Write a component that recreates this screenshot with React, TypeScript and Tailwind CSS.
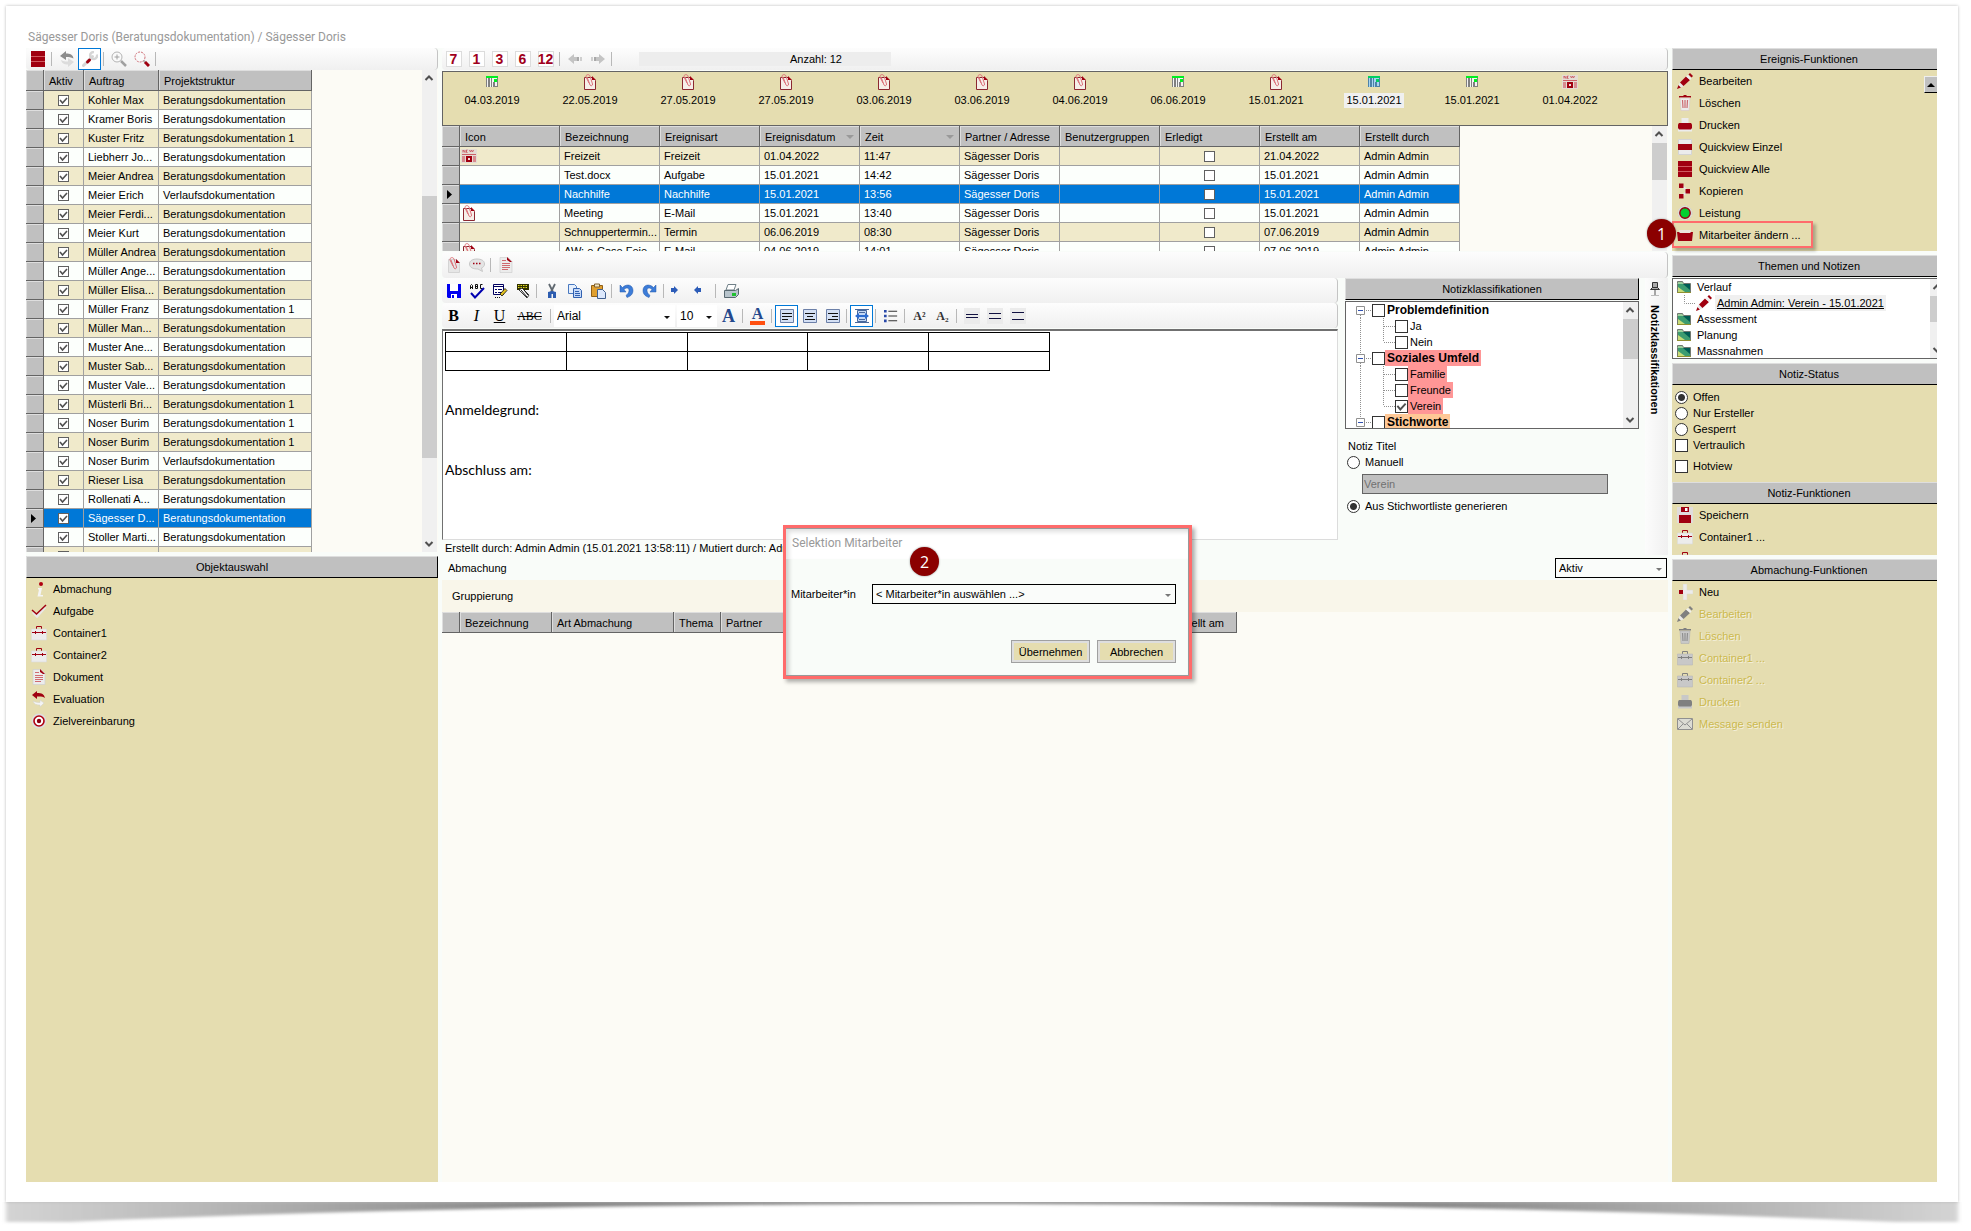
import React from 'react';
import clsx from 'clsx';

type IconProps = { name: string; off?: boolean; className?: string };

const Icon: React.FC<IconProps> = ({ name, off, className }) => {
  const main = off ? '#808080' : '#a00010';
  const soft = off ? '#c8c8c8' : '#ececec';
  const shapes: Record<string, React.ReactNode> = {
    stack: (
      <>
        <path fill={main} d="M1 0h14v16H1z" />
        <path stroke="#d05a60" d="M1 5.500h14M1 10.500h14" />
      </>
    ),
    quick: (
      <>
        <path fill="#ececec" stroke="#d4d4d4" d="M1.500.5h13v15h-13z" />
        <path fill={main} d="M1 5h14v6H1z" />
      </>
    ),
    swap: (
      <>
        <path fill="#8c8c8c" d="M1 5l6-5v2.500c4 0 7 1 7.500 5C12 6 10 6 7 6v3z" />
        <path fill="#dcdcdc" d="M15 11l-6 5v-2.500c-4 0-6-1-7-4.500 2 1.500 4 1.500 7 1.500V7z" />
      </>
    ),
    evaluation: (
      <>
        <path fill={main} d="M1 4l5-4v2c5 0 7 1 8 5-2-1.500-4-1.600-8-1.500V8z" />
        <path fill="#f4f4f4" stroke="#d0d0c8" strokeWidth=".5" d="M13 12l-4 4v-2c-4 0-6-1-7-4 2 1 4 1.500 7 1.500V9z" />
      </>
    ),
    wrench: (
      <>
        <path stroke="#d6d6d6" strokeWidth="3" strokeLinecap="round" d="M1.500 14.500l9-9" />
        <path fill="none" stroke="#d6d6d6" strokeWidth="2.500" d="M15 3.500a3.500 3.500 0 1 1-3-2.500" />
        <path stroke={main} strokeWidth="3" strokeLinecap="round" d="M5.500 11l2-2" />
      </>
    ),
    zoomIn: (
      <>
        <circle cx="6" cy="6" r="5" fill="#fafafa" stroke="#b4b4b4" />
        <path stroke="#a0a0a0" d="M6 3.500v5M3.500 6h5" />
        <path stroke="#a0a0a0" strokeWidth="2.500" d="M10 10l5 5" />
      </>
    ),
    zoomRed: (
      <>
        <circle cx="6" cy="6" r="5" fill="#fafafa" stroke="#d07078" strokeDasharray="2 1" />
        <path stroke="#b0b0b0" strokeWidth="2" d="M9.500 9.500l2 2" />
        <path stroke={main} strokeWidth="3" d="M11 11l4 4" />
      </>
    ),
    info: (
      <>
        <circle cx="10" cy="3" r="2" fill="#b00010" />
        <path fill="#f4f4f4" d="M7 7h4l-1.500 7H12v1.500H6.500L8 8.500H7z" />
      </>
    ),
    check: (
      <>
        <path fill="none" stroke="#e8e8e8" strokeWidth="3" d="M2 9l4 4 8-9" />
        <path fill="none" stroke={main} strokeWidth="1.500" d="M1 7l4.500 4L15 2" />
      </>
    ),
    case: (
      <>
        <path fill="none" stroke={main} d="M5.500 4V1.500h5V4" />
        <path fill={soft} stroke={off ? '#b8b8b8' : '#dadada'} strokeWidth=".6" d="M.5 4h15v11H.5z" />
        <path stroke={main} d="M1 7.500h14M4.500 6v3M11.500 6v3" />
      </>
    ),
    doc: (
      <>
        <path fill="#ececec" stroke="#d0d0d0" strokeWidth=".7" d="M2 .5h8l4 4V15.500H2z" />
        <path fill={main} d="M9 0l5 5h-2L9 3z" />
        <path stroke="#d06a70" d="M4 3.500h4M4 6.500h8M4 8.500h8M4 10.500h8M4 12.500h6" />
      </>
    ),
    target: (
      <>
        <circle cx="8" cy="8" r="7.500" fill="#dedede" />
        <circle cx="8" cy="8" r="5" fill="#fff" stroke="#b00010" strokeWidth="1.600" />
        <circle cx="8" cy="8" r="2.200" fill="#8c0010" />
      </>
    ),
    calendar: (
      <>
        <path fill="#f4f4f4" d="M2 2h12v11H2z" />
        <path fill="#808080" d="M2 4h1v9H2zM4 4h2v9H4zM7 4h1v9H7zM9 8h2v5H9zM13 4h1v9h-1zM11 12h3v1h-3z" />
        <path fill="#00f020" d="M2 2h12v2H2zM10 5h3v3h-3z" />
      </>
    ),
    calendarOn: (
      <>
        <path fill="#a8d4f0" d="M2 2h12v11H2z" />
        <path fill="#4c82a8" d="M2 4h1v9H2zM4 4h2v9H4zM7 4h1v9H7zM9 8h2v5H9zM13 4h1v9h-1zM11 12h3v1h-3z" />
        <path fill="#00d060" d="M2 2h12v2H2zM10 5h3v3h-3z" />
      </>
    ),
    clip: (
      <>
        <path fill="#f6efe9" stroke="#8c2830" d="M2.500 3.500h8l3 3v9h-11z" />
        <path fill={main} d="M10 2l4 4h-4z" />
        <path fill="none" stroke="#dc7078" d="M5 3l3 8c1 1.500 3 .5 2.500-1L8 2C7-.3 3.500.5 4 3l3 6" />
      </>
    ),
    clipSoft: (
      <>
        <path fill="#e6e6e6" stroke="#d4d4d4" d="M2.500 2.500h8l3 3v10h-11z" />
        <path fill={main} d="M10 2l4 4h-4z" />
        <path fill="none" stroke="#dc7078" d="M5 3l3 8c1 1.500 3 .5 2.500-1L8 2C7-.3 3.500.5 4 3l3 6" />
      </>
    ),
    news: (
      <>
        <path fill="#e4dcd4" d="M0 1h16v14H0z" />
        <path fill="none" stroke="#cc6068" d="M2 4.500V2l2 2.500V2M6.500 2h-1v2.500h1M8.500 2l1 2 1-2 1 2 1-2M1 6.500h14" />
        <path fill="#d88c90" d="M1 8h3v6H1zM12 8h3v6h-3z" />
        <path fill="#a00010" d="M5 8h6v6H5z" />
        <path fill="#f4dada" d="M7 10h2v2H7z" />
      </>
    ),
    speech: (
      <>
        <path fill="#e4e4e4" stroke="#c8c8c8" d="M8 2c4 0 7.500 1.500 7.500 5 0 2-1 3-3 4l1 3.500L9 12c-5 0-8.500-1.500-8.500-5C.5 3.500 4 2 8 2z" />
        <path stroke={main} strokeWidth="1.500" strokeDasharray="1.500 1.500" d="M4 6.500h8" />
      </>
    ),
    pencil: (
      <>
        <path fill={main} d="M0 16l1.500-4L4 14.500z" />
        <path fill="#e8e8e8" d="M1.500 12L3 9l4 4-3 1.500z" />
        <path fill={main} d="M3 9.500L9 3.500l4 3.500-6.500 6z" />
        <path fill="#efefef" d="M9 3.500L11 2l3.500 3.500L13 7z" />
        <path fill={main} d="M11.500 1.500L13 0l3 3-1.500 1.500z" />
      </>
    ),
    trash: (
      <>
        <path fill={main} d="M2 1h12v1.500H2zM6.500 0h3v1h-3z" />
        <path fill={soft} stroke={off ? '#b0b0b0' : '#d8c8c8'} strokeWidth=".6" d="M3 3h10l-1 12.500H4z" />
        <path stroke={off ? '#909090' : '#cc6a70'} strokeWidth="1.200" d="M5.500 5l.5 8M8 5v8M10.500 5l-.5 8" />
      </>
    ),
    printer: (
      <>
        <path fill={soft} d="M4.500 1h7v6h-7zM1 10h14v4.500H1z" />
        <path fill={main} d="M2 6h12l1 1.500V11l-1 1.500H2L1 11V7.500z" />
      </>
    ),
    nodes: (
      <>
        <path fill="none" stroke="#e8e8e8" strokeWidth="2" d="M5 3l6 5-6 5" />
        <path fill={main} d="M2 .5h4.500V5H2zM8.500 6H13v4.500H8.500zM2 11h4.500v4.500H2z" />
      </>
    ),
    service: (
      <>
        <circle cx="8" cy="8" r="7" fill="#e4e4e4" stroke="#d0d0d0" strokeDasharray="2 1.500" />
        <circle cx="8" cy="8" r="5.200" fill="#00d030" stroke="#900010" strokeWidth="1.400" />
      </>
    ),
    folder: (
      <>
        <path fill="#ece4dc" d="M2 3h12v3H2z" />
        <path fill={main} d="M0 5h2l1 1h10l1-1h2l-1 9H1z" />
      </>
    ),
    save: (
      <>
        <path fill="#e0dcdc" d="M0 0h16v16H0z" />
        <path fill={main} d="M2 8h12v8H2zM4 0h8v5H4z" />
        <path fill="#fff" d="M8 1h2.500v3H8z" />
      </>
    ),
    plus: (
      <>
        <path fill="#ececec" stroke="#dcd8c8" strokeWidth=".5" d="M6 0h4v6h6v4h-6v6H6v-6H2V6h4z" />
        <path fill={main} d="M2 6h4v4H2z" />
      </>
    ),
    mail: (
      <>
        <path fill="#dcdcd4" stroke="#909090" d="M.5 2.500h15v11H.5z" />
        <path fill="none" stroke="#909090" d="M1 3l7 6 7-6M1 13l5-5M15 13l-5-5" />
      </>
    ),
    greenFolder: (
      <>
        <path fill="#9ccf9c" stroke="#707870" d="M1.500 4.500v-2h5l1 2h7v9h-13z" />
        <path fill="#3c9c70" d="M2 5h12v8H2z" />
        <path fill="#005c54" d="M7 5h7v6z" />
        <path fill="#c8dc78" d="M2 8l7 5H2z" />
        <path fill="none" stroke="#909030" d="M1 13.500h14" />
      </>
    ),
    arrowLeft: (
      <>
        <path fill="#c4c4c4" d="M1 8l6-5v3h3v4H7v3z" />
        <path fill="#a8a8a8" d="M10 6h2v4h-2z" />
        <path fill="#cfcfcf" d="M13 6h2v4h-2z" />
      </>
    ),
    arrowRight: (
      <>
        <path fill="#c4c4c4" d="M15 8L9 3v3H6v4h3v3z" />
        <path fill="#a8a8a8" d="M4 6h2v4H4z" />
        <path fill="#cfcfcf" d="M1 6h2v4H1z" />
      </>
    ),
    disk: (
      <>
        <path fill="#0000f0" d="M1 1h14v14H2l-1-1z" />
        <path fill="#fff" d="M4 1h8v7H4zM5 11h6v4H5z" />
        <path fill="#0000f0" d="M6 12h2v3H6z" />
      </>
    ),
    spell: (
      <>
        <path fill="none" stroke="#111" d="M1.500 6V2.500l1-1 1 1V6M1.500 4.500h2M6.500 1.500v4h2v-4zM6.500 3.500h2M13.500 1.500h-2v4h2" />
        <path fill="none" stroke="#0000b0" strokeWidth="2" d="M2 10l4 4.500L15 5" />
      </>
    ),
    form: (
      <>
        <path fill="#fff" stroke="#000060" d="M1.500 1.500h10v10h-10z" />
        <path stroke="#000060" d="M1 3.500h10M3 6.500h2M6 6.500h4M3 9.500h2M6 9.500h4" />
        <path fill="#e0c020" stroke="#111" strokeWidth=".8" d="M8 11l5-5.500 2 2-5 5.500z" />
        <path stroke="#111" strokeDasharray="1 1" d="M3 14.500h6" />
      </>
    ),
    highlight: (
      <>
        <path fill="#303000" d="M2 1h12v6H2z" />
        <path stroke="#e8e020" strokeDasharray="1.500 1" d="M3 2.500h10M3 4.500h10" />
        <path fill="#fff" stroke="#111" strokeWidth=".8" d="M4 7l3-2 7 7-2 3z" />
        <path stroke="#111" d="M6 7l6 7M9 7l4 5" />
      </>
    ),
    cut: (
      <>
        <path stroke="#606870" strokeWidth="1.800" d="M5 1l4 8M11 1L7 9" />
        <path fill="#2c5cb0" d="M4 9l4-1 4 1v6H9v-4H7.500v4H4z" />
      </>
    ),
    copy: (
      <>
        <path fill="#e6effc" stroke="#4878c0" d="M1.500 1.500h6l2 2v7h-8z" />
        <path fill="#c4d8f8" stroke="#3060b0" d="M6.500 5.500h6l2 2v7h-8z" />
        <path stroke="#3060b0" d="M8 8.500h4M8 10.500h5M8 12.500h5" />
      </>
    ),
    paste: (
      <>
        <path fill="#e0a030" stroke="#906018" d="M1.500 2.500h11v11h-11z" />
        <path fill="#f4e8c0" stroke="#806030" d="M4.500 1h5v3h-5z" />
        <path fill="#dce8fc" stroke="#406090" d="M7.500 6.500h5l3 3v6h-8z" />
      </>
    ),
    undo: <path fill="#3c7cd8" stroke="#2458a8" strokeWidth=".5" d="M1 2v7h6L5 6.500C8 4 10 5 10 7.500s-2 4-3 5l1 2c3-1 6-3 6-7C14 2 8 0 3.500 4.500z" />,
    redo: <path fill="#3c7cd8" stroke="#2458a8" strokeWidth=".5" d="M14 2v7H8l2-2.500C7 4 5 5 5 7.500s2 4 3 5l-1 2c-3-1-6-3-6-7C1 2 7 0 11.500 4.500z" />,
    hintRight: <path fill="#2c5cb8" d="M0 5h3V3l4 4-4 4V9H0z" />,
    hintLeft: <path fill="#2c5cb8" d="M7 5H4V3L0 7l4 4V9h3z" />,
    print: (
      <>
        <path fill="#fff" stroke="#708088" d="M5 1.500h8L11 7H3z" />
        <path fill="#b8c4cc" stroke="#586870" d="M1.500 7.500h11l3-2v6l-3 3h-11z" />
        <path fill="#20c030" d="M9 10h4v3H9z" />
      </>
    ),
    alignLeft: (
      <>
        <path fill="#d4e0f4" stroke="#6c80a8" d="M1.500 1.500h13v13h-13z" />
        <path stroke="#111" d="M3 5.500h10M3 8.500h10M3 11.500h6" />
      </>
    ),
    alignCenter: (
      <>
        <path fill="#d4e0f4" stroke="#6c80a8" d="M1.500 1.500h13v13h-13z" />
        <path stroke="#111" d="M3 5.500h10M5 8.500h6M3 11.500h10" />
      </>
    ),
    alignRight: (
      <>
        <path fill="#d4e0f4" stroke="#6c80a8" d="M1.500 1.500h13v13h-13z" />
        <path stroke="#111" d="M3 5.500h10M7 8.500h6M3 11.500h10" />
      </>
    ),
    wrap: (
      <>
        <path fill="#c4d8f4" stroke="#48689c" d="M3.500 2.500h9v11h-9z" />
        <path stroke="#48689c" d="M1 1.500h14M1 14.500h14M5 4.500h6M5 11.500h6" />
        <path fill="#2c6cd0" d="M1 8l4-3v2h6V5l4 3-4 3V9H5v2z" />
      </>
    ),
    list: (
      <>
        <path fill="#2848a8" d="M0 1h3v3H0zM0 6.500h3v3H0zM0 12h3v3H0z" />
        <path stroke="#333" strokeWidth="1.200" d="M5 2.500h10M5 8h10M5 13.500h10" />
      </>
    ),
    pin: (
      <>
        <path fill="#aaa" stroke="#333" d="M5.500 1.500h5v5h-5zM3.500 8.500l2-2h5l2 2z" />
        <path stroke="#555" d="M8 9v5" />
        <path stroke="#bbb" d="M4 14.500h8" />
      </>
    ),
    up: <path fill="none" stroke="#505050" strokeWidth="2" d="M4.500 10L8 6.500l3.500 3.500" />,
    down: <path fill="none" stroke="#505050" strokeWidth="2" d="M4.500 6L8 9.500 11.500 6" />,
  };
  return (
    <svg viewBox="0 0 16 16" aria-hidden="true" className={clsx('block h-4 w-4 shrink-0', className)}>
      {shapes[name]}
    </svg>
  );
};

const Rules: React.FC<{ gap: number }> = ({ gap }) => (
  <svg viewBox="0 0 16 16" aria-hidden="true" className="block h-4 w-4">
    <path fill="#ebebeb" d="M0 0h16v16H0z" />
    <path stroke="#101040" d={`M2 ${7.5 - gap}h12M2 ${8.5 + gap}h12`} />
  </svg>
);

const Tool: React.FC<{ label: string; on?: boolean; wide?: boolean; children: React.ReactNode }> = ({ label, on, wide, children }) => (
  <button
    type="button"
    aria-label={label}
    className={clsx('flex h-[22px] shrink-0 items-center justify-center', wide ? 'w-[37px]' : 'w-[23px]', on && 'border border-[#0078d7] bg-white')}
  >
    {children}
  </button>
);

const Sep = () => <span className="mx-[2px] h-[14px] w-[2px] shrink-0 border-l border-[#b8b8b8]" />;

const Bar: React.FC<{ className?: string; children: React.ReactNode }> = ({ className, children }) => (
  <div className={clsx('flex items-center rounded-sm border-r border-[#c4c4c4] bg-gradient-to-b from-[#fdfdfd] to-[#f0f0f0]', className)}>{children}</div>
);

const PanelTitle: React.FC<{ children: React.ReactNode }> = ({ children }) => (
  <h2 className="h-[22px] shrink-0 border-t border-r border-b border-l border-t-[#dedede] border-r-black border-b-black border-l-[#dedede] bg-[#c0c0c0] text-center leading-[20px]">
    {children}
  </h2>
);

const Check: React.FC<{ label?: string; id?: string; checked?: boolean; size?: 'sm' | 'md' }> = ({ label, id, checked, size = 'md' }) => (
  <span className="relative block shrink-0">
    <input
      type="checkbox"
      id={id}
      aria-label={label}
      defaultChecked={checked}
      className={clsx('peer block appearance-none border bg-white', size === 'sm' ? 'h-[11px] w-[11px] border-[#606060]' : 'h-[13px] w-[13px] border-[#333]')}
    />
    <svg viewBox="0 0 11 11" aria-hidden="true" className="pointer-events-none absolute inset-0 hidden h-full w-full peer-checked:block">
      <path fill="none" stroke="#505050" strokeWidth="1.600" d="M2 5l2.500 3L9 3" />
    </svg>
  </span>
);

const Radio: React.FC<{ id: string; name: string; label: string; checked?: boolean }> = ({ id, name, label, checked }) => (
  <div className="flex h-4 items-center gap-[5px]">
    <input
      type="radio"
      id={id}
      name={name}
      defaultChecked={checked}
      className="block h-[13px] w-[13px] appearance-none rounded-full border border-[#333] bg-white checked:bg-[radial-gradient(circle,#333_3px,#fff_4px)]"
    />
    <label htmlFor={id}>{label}</label>
  </div>
);

const Combo: React.FC<{ label: string; id?: string; value: string; plain?: boolean; className?: string }> = ({ label, id, value, plain, className }) => (
  <span className={clsx('relative block shrink-0', className)}>
    <select
      id={id}
      aria-label={label}
      className={clsx('block w-full appearance-none', plain ? 'h-[22px] bg-white pl-[3px] text-xs' : 'h-5 border border-black bg-[#fafcfa] pl-[3px]')}
    >
      <option>{value}</option>
    </select>
    <svg viewBox="0 0 6 3" aria-hidden="true" className="pointer-events-none absolute top-1/2 right-[5px] h-[3px] w-[6px]">
      <path fill={plain ? '#111' : '#777'} d="M0 0h6L3 3z" />
    </svg>
  </span>
);

const Scroll: React.FC<{ before: string; thumb: string }> = ({ before, thumb }) => (
  <div className="flex w-[15px] shrink-0 flex-col bg-[#f0f0f0]">
    <Icon name="up" className="-mx-px" />
    <div className={before} />
    <div className={clsx('bg-[#cdcdcd]', thumb)} />
    <Icon name="down" className="-mx-px mt-auto" />
  </div>
);

const Pointer = () => (
  <svg viewBox="0 0 5 9" aria-hidden="true" className="mr-auto ml-[5px] block h-[9px] w-[5px]">
    <path d="M0 0l5 4.500L0 9z" />
  </svg>
);

const HEAD = 'h-[21px] overflow-hidden whitespace-nowrap border-r border-b border-[#646464] bg-[#c0c0c0] px-[5px] pt-0.5 text-left font-normal shadow-[inset_1px_1px_0_#dedede]';
const ROWHEAD = 'border-r border-b border-[#646464] bg-[#c0c0c0] shadow-[inset_1px_1px_0_#dedede]';
const CELL = 'h-[19px] overflow-hidden whitespace-nowrap border-r border-b border-[#a0a0a0] px-[4px] leading-[18px]';

const rowColor = (i: number, selected: boolean) => (selected ? 'bg-[#0078d7] text-white' : i % 2 ? 'bg-[#fcfffc]' : 'bg-[#f0eacb]');

const B = 'Beratungsdokumentation';
const V = 'Verlaufsdokumentation';
const clients: [string, string][] = [
  ['Kohler Max', B],
  ['Kramer Boris', B],
  ['Kuster Fritz', `${B} 1`],
  ['Liebherr Jo...', B],
  ['Meier Andrea', B],
  ['Meier Erich', V],
  ['Meier Ferdi...', B],
  ['Meier Kurt', B],
  ['Müller Andrea', B],
  ['Müller Ange...', B],
  ['Müller Elisa...', B],
  ['Müller Franz', `${B} 1`],
  ['Müller Man...', B],
  ['Muster Ane...', B],
  ['Muster Sab...', B],
  ['Muster Vale...', B],
  ['Müsterli Bri...', `${B} 1`],
  ['Noser Burim', `${B} 1`],
  ['Noser Burim', `${B} 1`],
  ['Noser Burim', V],
  ['Rieser Lisa', B],
  ['Rollenati A...', B],
  ['Sägesser D...', B],
  ['Stoller Marti...', B],
  ['Test Test', B],
];

const timeline: [string, string][] = [
  ['calendar', '04.03.2019'],
  ['clip', '22.05.2019'],
  ['clip', '27.05.2019'],
  ['clip', '27.05.2019'],
  ['clip', '03.06.2019'],
  ['clip', '03.06.2019'],
  ['clip', '04.06.2019'],
  ['calendar', '06.06.2019'],
  ['clip', '15.01.2021'],
  ['calendarOn', '15.01.2021'],
  ['calendar', '15.01.2021'],
  ['news', '01.04.2022'],
];

const events = [
  { icon: 'news', name: 'Freizeit', kind: 'Freizeit', date: '01.04.2022', time: '11:47', created: '21.04.2022' },
  { icon: '', name: 'Test.docx', kind: 'Aufgabe', date: '15.01.2021', time: '14:42', created: '15.01.2021' },
  { icon: '', name: 'Nachhilfe', kind: 'Nachhilfe', date: '15.01.2021', time: '13:56', created: '15.01.2021' },
  { icon: 'clip', name: 'Meeting', kind: 'E-Mail', date: '15.01.2021', time: '13:40', created: '15.01.2021' },
  { icon: '', name: 'Schnuppertermin...', kind: 'Termin', date: '06.06.2019', time: '08:30', created: '07.06.2019' },
  { icon: 'clip', name: 'AW: e-Case Feie...', kind: 'E-Mail', date: '04.06.2019', time: '14:01', created: '07.06.2019' },
];

const eventHeads = ['Icon', 'Bezeichnung', 'Ereignisart', 'Ereignisdatum', 'Zeit', 'Partner / Adresse', 'Benutzergruppen', 'Erledigt', 'Erstellt am', 'Erstellt durch'];

const objects: [string, string][] = [
  ['info', 'Abmachung'],
  ['check', 'Aufgabe'],
  ['case', 'Container1'],
  ['case', 'Container2'],
  ['doc', 'Dokument'],
  ['evaluation', 'Evaluation'],
  ['target', 'Zielvereinbarung'],
];

const eventActions: [string, string][] = [
  ['pencil', 'Bearbeiten'],
  ['trash', 'Löschen'],
  ['printer', 'Drucken'],
  ['quick', 'Quickview Einzel'],
  ['stack', 'Quickview Alle'],
  ['nodes', 'Kopieren'],
  ['service', 'Leistung'],
];

const dealActions: [string, string][] = [
  ['pencil', 'Bearbeiten'],
  ['trash', 'Löschen'],
  ['case', 'Container1 ...'],
  ['case', 'Container2 ...'],
  ['printer', 'Drucken'],
  ['mail', 'Message senden'],
];

const tree = [
  { text: 'Problemdefinition', root: true },
  { text: 'Ja' },
  { text: 'Nein' },
  { text: 'Soziales Umfeld', root: true, mark: 'bg-[#ff9696]' },
  { text: 'Familie', mark: 'bg-[#ff9696]' },
  { text: 'Freunde', mark: 'bg-[#ff9696]' },
  { text: 'Verein', mark: 'bg-[#ff9696]', checked: true },
  { text: 'Stichworte', root: true, mark: 'bg-[#ffc896]' },
];

const Action: React.FC<{ icon: string; off?: boolean; children: React.ReactNode }> = ({ icon, off, children }) => (
  <button
    type="button"
    disabled={off}
    className={clsx('flex h-[22px] shrink-0 items-center gap-1.5 pl-[5px] whitespace-nowrap', off && 'text-[#ccb94e] [text-shadow:1px_1px_0_#f4f0dc]')}
  >
    <Icon name={icon} off={off} />
    {children}
  </button>
);

const Badge: React.FC<{ className: string; children: React.ReactNode }> = ({ className, children }) => (
  <span className={clsx("absolute flex h-[29px] w-[29px] items-center justify-center rounded-full bg-[#8b0000] font-['Open_Sans',sans-serif] text-base text-white shadow-[0_0_2px_#888]", className)}>
    {children}
  </span>
);

const LeftPanel = () => (
  <aside className="flex min-h-0 flex-col">
    <Bar className="h-[22px] shrink-0">
      <Tool label="Liste"><Icon name="stack" /></Tool>
      <Sep />
      <Tool label="Aktualisieren"><Icon name="swap" /></Tool>
      <Tool label="Werkzeug" on><Icon name="wrench" /></Tool>
      <Sep />
      <Tool label="Vergrössern"><Icon name="zoomIn" /></Tool>
      <Tool label="Suche"><Icon name="zoomRed" /></Tool>
      <Sep />
    </Bar>
    <div className="mb-1 flex h-[482px] shrink-0 justify-between overflow-hidden bg-[#fcfbf5]">
      <table className="w-[286px] table-fixed border-separate border-spacing-0 self-start">
        <thead>
          <tr>
            <th className={clsx(HEAD, 'w-[18px]')} />
            <th className={clsx(HEAD, 'w-[40px]')}>Aktiv</th>
            <th className={clsx(HEAD, 'w-[75px]')}>Auftrag</th>
            <th className={HEAD}>Projektstruktur</th>
          </tr>
        </thead>
        <tbody>
          {clients.map(([name, project], i) => {
            const selected = name.startsWith('Sägesser');
            return (
              <tr key={i} className={rowColor(i, selected)}>
                <td className={ROWHEAD}>{selected && <Pointer />}</td>
                <td className={CELL}>
                  <div className="flex justify-center"><Check label={`${name} aktiv`} checked size="sm" /></div>
                </td>
                <td className={CELL}>{name}</td>
                <td className={CELL}>{project}</td>
              </tr>
            );
          })}
        </tbody>
      </table>
      <div className="mr-px flex"><Scroll before="h-[110px]" thumb="h-[262px]" /></div>
    </div>
    <PanelTitle>Objektauswahl</PanelTitle>
    <div className="flex flex-1 flex-col bg-[#e5ddb0]">
      {objects.map(([icon, text]) => (
        <Action key={text} icon={icon}>{text}</Action>
      ))}
    </div>
  </aside>
);

const Events = () => (
  <>
    <Bar className="h-[22px]">
      {['7', '1', '3', '6', '12'].map((n) => (
        <Tool key={n} label={`${n} anzeigen`}>
          <span className="flex h-4 w-4 items-center justify-center border border-[#dcdcdc] bg-white text-sm leading-none font-bold text-[#a0001c]">{n}</span>
        </Tool>
      ))}
      <Sep />
      <Tool label="Zurück"><Icon name="arrowLeft" /></Tool>
      <Tool label="Vor"><Icon name="arrowRight" /></Tool>
      <Sep />
      <span className="ml-6 h-[14px] w-[252px] bg-[#ededed] pl-[151px] leading-[14px]">Anzahl: 12</span>
    </Bar>
    <div className="mt-px flex h-[55px] border border-[#646464] bg-[#e5ddb0]">
      {timeline.map(([icon, date], i) => (
        <button key={i} type="button" className="flex w-[98px] flex-col items-center pt-[2px]">
          <Icon name={icon} />
          <span className={clsx('mt-[3px] px-0.5 leading-[15px]', icon === 'calendarOn' && 'bg-[#f0f0f0]')}>{date}</span>
        </button>
      ))}
    </div>
    <div className="flex h-[125px] justify-between overflow-hidden bg-[#fcfbf5]">
      <table className="w-[1018px] table-fixed border-separate border-spacing-0 self-start">
        <thead>
          <tr>
            <th className={clsx(HEAD, 'w-[18px]')} />
            {eventHeads.map((head) => (
              <th key={head} className={HEAD}>
                <span className="flex items-center justify-between">
                  {head}
                  {(head === 'Ereignisdatum' || head === 'Zeit') && (
                    <svg viewBox="0 0 8 4" aria-hidden="true" className="h-1 w-2"><path fill="#999" d="M0 0h8L4 4z" /></svg>
                  )}
                </span>
              </th>
            ))}
          </tr>
        </thead>
        <tbody>
          {events.map((e, i) => {
            const selected = i === 2;
            return (
              <tr key={i} className={rowColor(i, selected)}>
                <td className={ROWHEAD}>{selected && <Pointer />}</td>
                <td className={clsx(CELL, 'px-px')}>{e.icon && <Icon name={e.icon} />}</td>
                <td className={CELL}>{e.name}</td>
                <td className={CELL}>{e.kind}</td>
                <td className={CELL}>{e.date}</td>
                <td className={CELL}>{e.time}</td>
                <td className={CELL}>Sägesser Doris</td>
                <td className={CELL} />
                <td className={CELL}><div className="flex justify-center"><Check label={`${e.name} erledigt`} size="sm" /></div></td>
                <td className={CELL}>{e.created}</td>
                <td className={CELL}>Admin Admin</td>
              </tr>
            );
          })}
        </tbody>
      </table>
      <div className="mr-px flex"><Scroll before="h-px" thumb="h-[37px]" /></div>
    </div>
    <Bar className="mt-px h-[26px]">
      <Tool label="Anhang"><Icon name="clipSoft" /></Tool>
      <Tool label="Kommentar"><Icon name="speech" /></Tool>
      <Sep />
      <Tool label="Dokument"><Icon name="doc" /></Tool>
    </Bar>
  </>
);

const Editor = () => (
  <div className="flex min-w-0 flex-1 flex-col">
    <Bar className="h-[25px] shrink-0">
      <Tool label="Speichern"><Icon name="disk" /></Tool>
      <Tool label="Rechtschreibung"><Icon name="spell" /></Tool>
      <Tool label="Formular"><Icon name="form" /></Tool>
      <Tool label="Markieren"><Icon name="highlight" /></Tool>
      <Sep />
      <Tool label="Ausschneiden"><Icon name="cut" /></Tool>
      <Tool label="Kopieren"><Icon name="copy" /></Tool>
      <Tool label="Einfügen"><Icon name="paste" /></Tool>
      <Sep />
      <Tool label="Rückgängig"><Icon name="undo" /></Tool>
      <Tool label="Wiederholen"><Icon name="redo" /></Tool>
      <Sep />
      <Tool label="Einzug vergrössern"><Icon name="hintRight" /></Tool>
      <Tool label="Einzug verkleinern"><Icon name="hintLeft" /></Tool>
      <Sep />
      <Tool label="Drucken"><Icon name="print" /></Tool>
    </Bar>
    <Bar className="h-[25px] shrink-0 font-['Liberation_Serif',serif] text-base">
      <Tool label="Fett"><b>B</b></Tool>
      <Tool label="Kursiv"><i>I</i></Tool>
      <Tool label="Unterstrichen"><u>U</u></Tool>
      <Tool label="Durchgestrichen" wide><s className="text-xs">ABC</s></Tool>
      <Sep />
      <Combo label="Schriftart" value="Arial" plain className="mr-0.5 w-[121px] font-['Liberation_Sans',sans-serif]" />
      <Combo label="Schriftgrösse" value="10" plain className="w-[40px] font-['Liberation_Sans',sans-serif]" />
      <Tool label="Schrift"><b className="text-lg leading-none text-[#24488c]">A</b></Tool>
      <Sep />
      <Tool label="Schriftfarbe"><b className="h-[18px] border-b-4 border-[#ff5010] px-0.5 leading-[14px] text-[#24488c]">A</b></Tool>
      <Sep />
      <Tool label="Linksbündig" on><Icon name="alignLeft" /></Tool>
      <Tool label="Zentriert"><Icon name="alignCenter" /></Tool>
      <Tool label="Rechtsbündig"><Icon name="alignRight" /></Tool>
      <Sep />
      <Tool label="Umbruch" on><Icon name="wrap" /></Tool>
      <Sep />
      <Tool label="Aufzählung"><Icon name="list" className="h-[14px] w-[14px]" /></Tool>
      <Sep />
      <Tool label="Hochgestellt"><b className="text-xs text-[#333]">A²</b></Tool>
      <Tool label="Tiefgestellt"><b className="text-xs text-[#333]">A₂</b></Tool>
      <Sep />
      <Tool label="Abstand einfach"><Rules gap={1} /></Tool>
      <Tool label="Abstand mittel"><Rules gap={2} /></Tool>
      <Tool label="Abstand doppelt"><Rules gap={3} /></Tool>
    </Bar>
    <div className="mt-px flex h-[211px] shrink-0 flex-col border border-t-2 border-[#dcdcdc] border-t-[#707070] border-l-[#707070] bg-white pt-px pl-[2px] font-['Lato',sans-serif] text-sm">
      <table className="w-[605px] table-fixed border-collapse">
        <tbody>
          {[0, 1].map((r) => (
            <tr key={r}>
              {[0, 1, 2, 3, 4].map((c) => (
                <td key={c} className="h-[19px] border border-black" />
              ))}
            </tr>
          ))}
        </tbody>
      </table>
      <p className="mt-[29px] leading-5">Anmeldegrund:</p>
      <p className="mt-[40px] leading-5">Abschluss am:</p>
    </div>
    <p className="pl-[3px] leading-4 whitespace-nowrap">Erstellt durch: Admin Admin (15.01.2021 13:58:11) / Mutiert durch: Admin Admin</p>
  </div>
);

const Classification = () => (
  <div className="flex w-[294px] shrink-0 flex-col">
    <PanelTitle>Notizklassifikationen</PanelTitle>
    <div className="mt-px flex h-[128px] shrink-0 overflow-hidden border border-[#646464] bg-white">
      <ul className="flex-1 pl-[10px]">
        {tree.map((node, i) => (
          <li key={node.text} className="flex h-4 items-center">
            {node.root ? (
              <svg viewBox="0 0 16 16" aria-hidden="true" className="h-4 w-4 shrink-0">
                {i > 0 && <path stroke="#909090" strokeDasharray="1 1" d="M4.500 0v4" />}
                {i < 7 && <path stroke="#909090" strokeDasharray="1 1" d="M4.500 13v3" />}
                <path stroke="#909090" strokeDasharray="1 1" d="M10 8.500h6" />
                <path fill="#fff" stroke="#909090" d="M.5 4.500h8v8h-8z" />
                <path stroke="#3050b0" d="M2 8.500h5" />
              </svg>
            ) : (
              <svg viewBox="0 0 39 16" aria-hidden="true" className="h-4 w-[39px] shrink-0">
                <path fill="none" stroke="#909090" strokeDasharray="1 1" d={`M4.500 0v16M27.500 0v${tree[i + 1].root ? 8 : 16}M28 8.500h11`} />
              </svg>
            )}
            <Check id={`node-${i}`} checked={node.checked} />
            <label htmlFor={`node-${i}`} className={clsx('px-0.5 leading-4 whitespace-nowrap', node.root && 'text-xs font-bold', node.mark)}>
              {node.text}
            </label>
          </li>
        ))}
      </ul>
      <Scroll before="h-px" thumb="h-[40px]" />
    </div>
    <fieldset className="mt-[9px] flex flex-col pl-[2px]">
      <legend className="mb-0 pl-px leading-4">Notiz Titel</legend>
      <Radio id="title-manual" name="title" label="Manuell" />
      <input aria-label="Titel" disabled defaultValue="Verein" className="my-[4px] ml-[15px] block h-[20px] w-[246px] border border-[#646464] bg-[#c0c0c0] px-px text-[#707070]" />
      <Radio id="title-auto" name="title" label="Aus Stichwortliste generieren" checked />
    </fieldset>
  </div>
);

const Center = () => (
  <main className="flex min-h-0 min-w-0 flex-col">
    <Events />
    <div className="flex h-[277px] shrink-0">
      <Editor />
      <div className="w-[7px] shrink-0" />
      <Classification />
      <div className="ml-1.5 flex w-[23px] shrink-0 flex-col items-center bg-gradient-to-r from-[#fcfcfc] to-[#f0f0f0] pt-[3px]">
        <Icon name="pin" className="mr-1" />
        <span className="mt-[8px] mr-1 text-[11px] leading-4 font-bold [writing-mode:vertical-rl]">Notizklassifikationen</span>
      </div>
    </div>
    <div className="flex h-[25px] shrink-0 items-center justify-between pt-px pr-px pl-1.5">
      <h2>Abmachung</h2>
      <Combo label="Status der Abmachungen" value="Aktiv" className="w-[112px]" />
    </div>
    <div className="h-[32px] shrink-0 bg-[#f9f6ea] pl-[10px] leading-[32px]">Gruppierung</div>
    <div className="flex-1 bg-[#fcfbf5]">
      <table className="w-[795px] table-fixed border-separate border-spacing-0">
        <thead>
          <tr>
            <th className={clsx(HEAD, 'w-[18px]')} />
            <th className={clsx(HEAD, 'w-[92px]')}>Bezeichnung</th>
            <th className={clsx(HEAD, 'w-[122px]')}>Art Abmachung</th>
            <th className={clsx(HEAD, 'w-[47px]')}>Thema</th>
            <th className={clsx(HEAD, 'w-[100px]')}>Partner</th>
            <th className={HEAD} />
            <th className={clsx(HEAD, 'w-[70px]')}>Erstellt am</th>
          </tr>
        </thead>
      </table>
    </div>
  </main>
);

const RightPanel = () => (
  <aside className="flex min-h-0 flex-col">
    <div className="relative h-[203px] shrink-0">
      <div className="h-full overflow-hidden bg-[#e5ddb0]">
        <div className="w-[274px]"><PanelTitle>Ereignis-Funktionen</PanelTitle></div>
        <div className="flex flex-col">
          {eventActions.map(([icon, text]) => (
            <Action key={text} icon={icon}>{text}</Action>
          ))}
          <Action icon="folder">Mitarbeiter ändern ...</Action>
        </div>
        <button type="button" aria-label="Nach oben" className="absolute top-[28px] right-0 flex h-[17px] w-[13px] items-center justify-center border border-r-0 border-[#eee] border-b-black bg-[#c0c0c0]">
          <svg viewBox="0 0 8 4" aria-hidden="true" className="h-1 w-2"><path d="M0 4h8L4 0z" /></svg>
        </button>
      </div>
      <div className="pointer-events-none absolute bottom-[3px] left-0 h-[27px] w-[141px] border-2 border-[#ff6b6b] shadow-[3px_3px_3px_#00000040]" />
      <Badge className="bottom-[3px] -left-[25px]">1</Badge>
    </div>
    <div className="mt-1 h-[108px] shrink-0 overflow-hidden bg-[#f9fcf9]">
      <div className="w-[274px]">
        <PanelTitle>Themen und Notizen</PanelTitle>
        <div className="mt-px flex h-[81px] overflow-hidden border border-[#646464] bg-white">
          <ul className="flex-1 leading-4">
            <li className="flex items-center gap-[5px] pl-[3px]"><Icon name="greenFolder" />Verlauf</li>
            <li className="flex items-center pl-[11px]">
              <svg viewBox="0 0 12 16" aria-hidden="true" className="h-4 w-3"><path fill="none" stroke="#909090" strokeDasharray="1 1" d="M.5 0v8.500H12" /></svg>
              <Icon name="pencil" />
              <a href="#verein" className="ml-[3px] bg-[#f0f0f0] px-0.5 whitespace-nowrap underline">Admin Admin: Verein - 15.01.2021</a>
            </li>
            {['Assessment', 'Planung', 'Massnahmen'].map((t) => (
              <li key={t} className="flex items-center gap-[5px] pl-[3px]"><Icon name="greenFolder" />{t}</li>
            ))}
          </ul>
          <Scroll before="h-px" thumb="h-[26px]" />
        </div>
      </div>
    </div>
    <div className="h-[119px] shrink-0 overflow-hidden bg-[#e5ddb0]">
      <div className="w-[274px]"><PanelTitle>Notiz-Status</PanelTitle></div>
      <div className="pt-[4px] pl-[3px]">
        <Radio id="state-open" name="state" label="Offen" checked />
        <Radio id="state-own" name="state" label="Nur Ersteller" />
        <Radio id="state-locked" name="state" label="Gesperrt" />
        <div className="flex h-4 items-center gap-[5px]"><Check id="private" /><label htmlFor="private">Vertraulich</label></div>
        <div className="mt-[5px] flex h-4 items-center gap-[5px]"><Check id="hotview" /><label htmlFor="hotview">Hotview</label></div>
      </div>
    </div>
    <div className="h-[73px] shrink-0 overflow-hidden bg-[#e5ddb0]">
      <div className="w-[274px]"><PanelTitle>Notiz-Funktionen</PanelTitle></div>
      <div className="flex flex-col">
        <Action icon="save">Speichern</Action>
        <Action icon="case">Container1 ...</Action>
        <Action icon="case">Container2 ...</Action>
      </div>
    </div>
    <div className="mt-1 min-h-0 flex-1 overflow-hidden bg-[#e5ddb0]">
      <div className="w-[274px]"><PanelTitle>Abmachung-Funktionen</PanelTitle></div>
      <div className="flex flex-col">
        <Action icon="plus">Neu</Action>
        {dealActions.map(([icon, text]) => (
          <Action key={text} icon={icon} off>{text}</Action>
        ))}
      </div>
    </div>
  </aside>
);

const Dialog = () => (
  <section
    role="dialog"
    aria-label="Selektion Mitarbeiter"
    className="absolute top-[525px] left-[783px] w-[409px] border-3 border-[#ff6b6b] bg-[#f9fcf9] shadow-[3px_3px_4px_#00000050]"
  >
    <div className="border-t border-r border-b border-[#999] shadow-[inset_3px_3px_4px_#00000030]">
      <h2 className="h-[30px] bg-white pl-[6px] font-['Roboto',sans-serif] text-xs leading-[28px] text-[#999] shadow-[inset_3px_3px_4px_#00000020]">Selektion Mitarbeiter</h2>
      <div className="flex items-center pt-[25px] pl-[5px]">
        <label htmlFor="employee" className="w-[81px]">Mitarbeiter*in</label>
        <Combo id="employee" label="Mitarbeiter*in" value="< Mitarbeiter*in auswählen ...>" className="w-[304px]" />
      </div>
      <div className="flex justify-end gap-[7px] pt-[36px] pr-[12px] pb-[12px]">
        {['Übernehmen', 'Abbrechen'].map((t) => (
          <button key={t} type="button" className="h-[23px] w-[79px] border border-[#a0a0a0] bg-[#e5ddb0] shadow-[inset_0_0_0_2px_#dedede]">{t}</button>
        ))}
      </div>
    </div>
    <Badge className="top-[19px] left-[124px]">2</Badge>
  </section>
);

const PageShadow = () => (
  <svg viewBox="0 0 1971 29" preserveAspectRatio="none" aria-hidden="true" className="block h-[29px] w-full shrink-0">
    <defs>
      <linearGradient id="fade">
        <stop offset="0" stopColor="#d4d4d4" />
        <stop offset=".28" stopColor="#858585" />
        <stop offset=".72" stopColor="#858585" />
        <stop offset="1" stopColor="#d4d4d4" />
      </linearGradient>
      <filter id="soft" x="-5%" y="-50%" width="110%" height="200%">
        <feGaussianBlur stdDeviation="2 1.500" />
      </filter>
    </defs>
    <path fill="url(#fade)" filter="url(#soft)" d="M6 -8H1958V20H1895Q1500 2 985 2T70 20H6z" />
  </svg>
);

const App: React.FC = () => (
  <div className="relative flex h-screen min-h-[900px] min-w-[1680px] flex-col bg-white font-['Liberation_Sans',Arial,sans-serif] text-[11px] leading-4 text-black">
    <div className="z-10 mt-1.5 mr-[13px] ml-1.5 flex min-h-0 flex-1 flex-col bg-white pt-[22px] pr-[21px] pb-5 pl-5 shadow-[0_0_3px_#bbb]">
      <h1 className="h-5 pl-0.5 font-['Roboto',sans-serif] text-xs leading-[18px] text-[#999]">Sägesser Doris (Beratungsdokumentation) / Sägesser Doris</h1>
      <div className="grid min-h-0 flex-1 grid-cols-[412px_minmax(0,1fr)_265px] gap-x-1 bg-[#f9fcf9]">
        <LeftPanel />
        <Center />
        <RightPanel />
      </div>
    </div>
    <PageShadow />
    <div className="z-20"><Dialog /></div>
  </div>
);

export default App;
